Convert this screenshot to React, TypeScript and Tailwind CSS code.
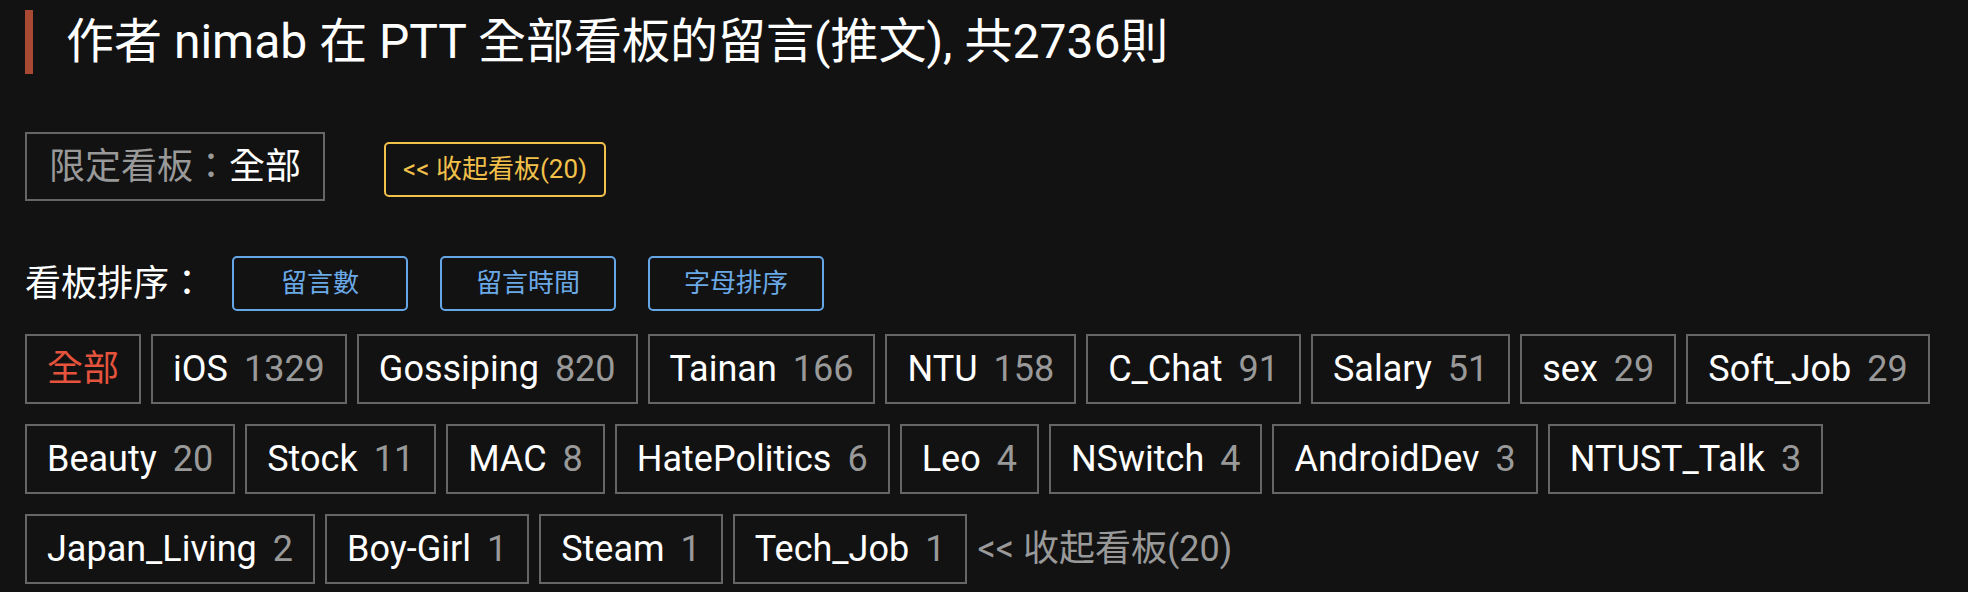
import React from 'react';

const boards: [string, number][] = [
  ['iOS', 1329],
  ['Gossiping', 820],
  ['Tainan', 166],
  ['NTU', 158],
  ['C_Chat', 91],
  ['Salary', 51],
  ['sex', 29],
  ['Soft_Job', 29],
  ['Beauty', 20],
  ['Stock', 11],
  ['MAC', 8],
  ['HatePolitics', 6],
  ['Leo', 4],
  ['NSwitch', 4],
  ['AndroidDev', 3],
  ['NTUST_Talk', 3],
  ['Japan_Living', 2],
  ['Boy-Girl', 1],
  ['Steam', 1],
  ['Tech_Job', 1],
];

const sorts = ['留言數', '留言時間', '字母排序'];

export default function App() {
  return (
    <div className="min-h-screen bg-[#121212] px-[25px] pt-[10px] text-white font-['Roboto','Noto_Sans_CJK_TC',sans-serif]">
      {/* 標題 */}
      <div className="flex items-center">
        <div className="w-[8px] h-[64px] bg-[#a84a33]" />
        <h1 className="ml-[33px] text-[48px] leading-[64px] font-normal">
          作者 nimab 在 PTT 全部看板的留言(推文), 共2736則
        </h1>
      </div>

      {/* 限定看板 */}
      <div className="flex items-center mt-[58px]">
        <div className="h-[69px] flex items-center border-2 border-[#666] px-[22px] text-[36px]">
          <span className="text-[#999]">限定看板：</span>
          <span className="text-white">全部</span>
        </div>
        <button className="ml-[59px] mt-[6px] h-[55px] px-[17px] border-2 border-[#f2c14a] rounded-[5px] text-[26px] text-[#f2c14a]">
          &lt;&lt; 收起看板(20)
        </button>
      </div>

      {/* 看板排序 */}
      <div className="flex items-center mt-[55px]">
        <span className="text-[36px] w-[207px]">看板排序：</span>
        <div className="flex gap-[32px]">
          {sorts.map((s) => (
            <button
              key={s}
              className="w-[176px] h-[55px] border-2 border-[#64a6e6] rounded-[5px] text-[26px] text-[#6aa9e6]"
            >
              {s}
            </button>
          ))}
        </div>
      </div>

      {/* 看板列表 */}
      <div className="flex flex-wrap items-center gap-x-[10px] gap-y-[20px] mt-[23px] text-[36px]">
        <div className="h-[70px] flex items-center border-2 border-[#666] px-[20px] text-[#e5533d]">
          全部
        </div>
        {boards.map(([name, count]) => (
          <div
            key={name}
            className="h-[70px] flex items-center border-2 border-[#666] px-[20px]"
          >
            <span className="text-white">{name}</span>
            <span className="ml-[16px] text-[#999]">{count}</span>
          </div>
        ))}
        <span className="text-[#999]">&lt;&lt; 收起看板(20)</span>
      </div>
    </div>
  );
}
